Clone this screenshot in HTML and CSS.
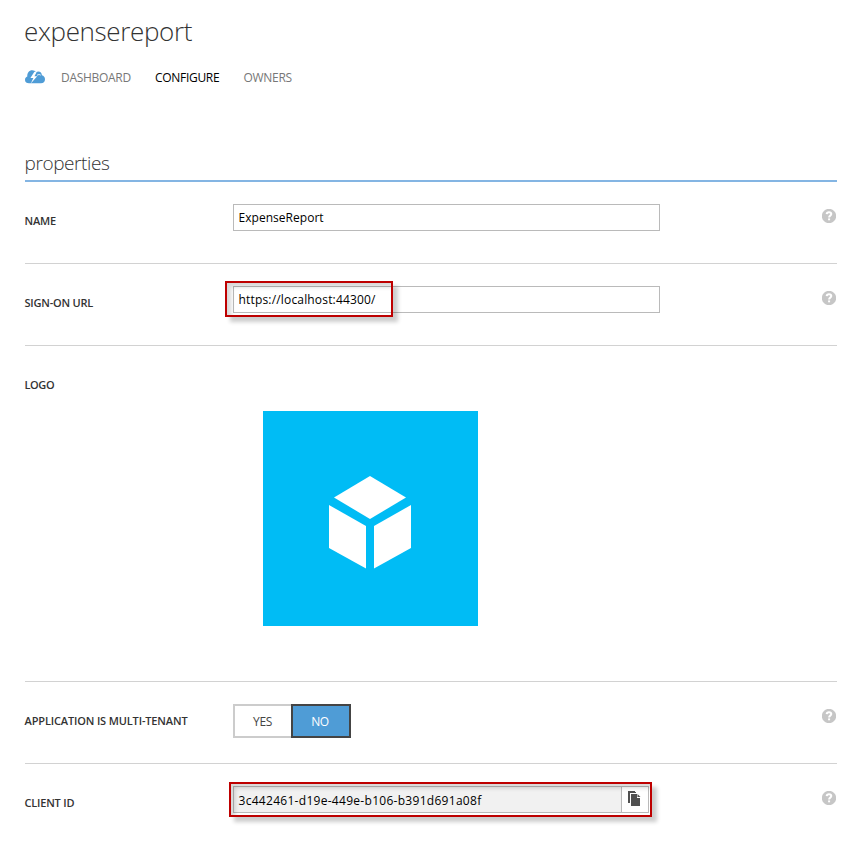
FILE: index.html
```html
<!DOCTYPE html>
<html lang="en">
<head>
<meta charset="utf-8">
<title>expensereport</title>
<link rel="stylesheet" href="styles.css">
</head>
<body>
<svg class="defs" width="0" height="0">
  <symbol id="help" viewBox="0 0 14 14">
    <circle cx="7" cy="7" r="7.200" fill="#c6c6c6"/>
    <path d="M4.700 5.100C4.800 3.700 5.700 3.200 7 3.200c1.400 0 2.300.8 2.300 1.900 0 1.600-2.200 1.500-2.200 3.300" fill="none" stroke="#fff" stroke-width="2"/>
    <rect x="6.100" y="9.400" width="2" height="1.900" fill="#fff"/>
  </symbol>
</svg>
<main class="page">
  <h1 class="title"><span>expensereport</span></h1>
  <nav class="tabs">
    <svg class="cloud" width="20" height="14" viewBox="0 0 20 14">
      <path d="M4 13.200C1.800 13.200 0 12 0 9.900 0 8.200 1 7 2.300 6.600 2 3 4.200.3 7.200.3c1.800 0 3 .8 3.800 2 .8-.6 1.500-.8 2.400-.8 2 0 3.400 1.500 3.500 3.700 1.900.5 3.100 2 3.100 4 0 2.400-1.600 4-4 4z" fill="#4f9cd6"/>
      <path d="M9.400 1.800 5.400 8h3l-2.600 5.600 6.400-7.300H9.400l2.200-4z" fill="#fff"/>
      <path d="M12 5.400c1-1 2.600-1.100 3.700-.3" fill="none" stroke="#fff" stroke-width=".9"/>
    </svg>
    <a class="tab tab-dashboard">DASHBOARD</a>
    <a class="tab tab-configure active">CONFIGURE</a>
    <a class="tab tab-owners">OWNERS</a>
  </nav>
  <h2 class="section"><span>properties</span></h2>

  <div class="row">
    <div class="label l-name">NAME</div>
    <div class="control"><div class="input"><span class="v-name">ExpenseReport</span></div></div>
    <svg class="help" width="14" height="14"><use href="#help"/></svg>
  </div>
  <div class="row">
    <div class="label l-url">SIGN-ON URL</div>
    <div class="control"><div class="input"><span class="v-url">https://localhost:44300/</span></div><div class="mark mark-url"></div></div>
    <svg class="help" width="14" height="14"><use href="#help"/></svg>
  </div>
  <div class="row row-logo">
    <div class="label l-logo">LOGO</div>
    <div class="logo">
      <svg width="82" height="93" viewBox="0 0 82 93" fill="#fff">
        <path d="M41 0 77 21.500 41 43 5 21.500z"/>
        <path d="M0 29 37 50v42.500L0 72z"/>
        <path d="M82 29 45 50v42.500L82 72z"/>
      </svg>
    </div>
  </div>
  <div class="row">
    <div class="label l-tenant">APPLICATION IS MULTI-TENANT</div>
    <div class="control toggle"><div class="option">YES</div><div class="option selected">NO</div></div>
    <svg class="help" width="14" height="14"><use href="#help"/></svg>
  </div>
  <div class="row row-last">
    <div class="label l-client">CLIENT ID</div>
    <div class="control">
      <div class="input readonly"><span class="v-client">3c442461-d19e-449e-b106-b391d691a08f</span>
        <div class="copy"><svg width="13" height="16" viewBox="0 0 13 16">
          <path d="M0 0h7v1H8v1H2v10H0z" fill="#505050"/>
          <path d="M3 3h6v4h3v8H3z" fill="#505050"/>
          <path d="M9.500 3 12.500 6h-3z" fill="#505050"/>
        </svg></div>
      </div>
      <div class="mark mark-client"></div>
    </div>
    <svg class="help" width="14" height="14"><use href="#help"/></svg>
  </div>
</main>
</body>
</html>
```
FILE: styles.css
```css
* { box-sizing: border-box; }
body { margin: 0; background: #fff; font-family: "Open Sans", "Noto Sans", sans-serif; color: #000; overflow: hidden; }
.defs { display: block; }
.page { width: 837px; height: 841px; padding-left: 25px; overflow: visible; }
.title { margin: 0 0 0 -1px; padding-top: 12px; height: 67px; font-size: 26px; line-height: 38px; font-weight: 300; color: #333; letter-spacing: -0.35px; }
.tabs { display: flex; height: 22px; align-items: center; font-size: 12px; color: #777; }
.cloud { margin: 0 16px 2px 0; }
.tab { letter-spacing: -0.3px; line-height: 18px; white-space: nowrap; }
.tab-dashboard { width: 94px; }
.tab-configure { width: 88.500px; }
.active { color: #000; }
.section { margin: 61px 0 0; height: 32px; border-bottom: 2px solid #84b5e3; font-size: 19px; line-height: 26px; font-weight: 300; color: #333; letter-spacing: -0.4px; text-indent: -0.5px; }
.row { display: flex; position: relative; height: 82px; border-bottom: 1px solid #d2d2d2; }
.row-logo { height: 336px; }
.row-last { height: 77px; border-bottom: 0; }
.label { width: 208px; padding-top: 30px; font-size: 11px; line-height: 18px; font-weight: 600; color: #333; white-space: nowrap; letter-spacing: -0.2px; text-indent: -0.5px; }
.l-tenant { letter-spacing: -0.14px; }
.l-logo { letter-spacing: -0.4px; }
.control { position: relative; width: 427px; margin-top: 22px; height: 27px; }
.input { display: flex; height: 27px; border: 1px solid #bababa; padding-left: 4.500px; font-size: 12px; line-height: 25px; background: #fff; white-space: nowrap; }
.v-name { letter-spacing: 0.03px; }
.v-url { letter-spacing: 0.17px; }
.v-client { letter-spacing: 0.29px; line-height: 27px; }
.help { margin: 27px 1px 0 auto; width: 14px; height: 14px; overflow: visible; }
.mark { position: absolute; border: 2px solid #be0000; box-shadow: 5px 5px 4px rgba(0,0,0,.2), inset 4px 4px 4px rgba(0,0,0,.16); }
.mark-url { left: -8px; top: -5px; width: 168px; height: 36px; }
.mark-client { left: -4px; top: -4px; width: 423px; height: 35px; }
.logo { width: 215px; height: 215px; margin: 65px 0 0 30px; background: #00bcf5; padding: 65px 0 0 66px; }
.toggle { display: flex; height: 34px; }
.option { width: 59px; height: 34px; border: 2px solid #ccc; border-right: 0; padding-right: 2px; font-size: 12px; line-height: 31px; text-align: center; color: #444; letter-spacing: -0.4px; }
.selected { width: 60px; margin-left: -1px; border: 2px solid #444; background: #4f9cd6; color: #fff; }
.readonly { width: 416px; background: #f1f1f1; justify-content: space-between; }
.copy { width: 27px; border-left: 1px solid #bababa; background: #fff; padding: 4px 0 0 6px; }
.copy svg { display: block; }
```
